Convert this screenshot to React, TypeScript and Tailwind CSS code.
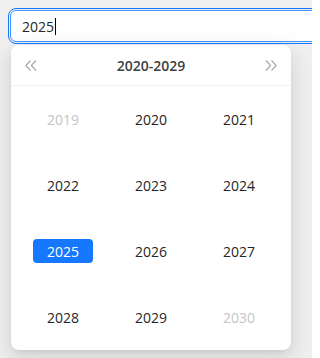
import React from 'react';

const years = [
  { y: 2019, out: true },
  { y: 2020 },
  { y: 2021 },
  { y: 2022 },
  { y: 2023 },
  { y: 2024 },
  { y: 2025, selected: true },
  { y: 2026 },
  { y: 2027 },
  { y: 2028 },
  { y: 2029 },
  { y: 2030, out: true },
];

const DoubleArrow = ({ dir }: { dir: 'left' | 'right' }) => (
  <svg width="12" height="11" viewBox="0 0 12 11" fill="none" className={dir === 'right' ? 'rotate-180' : ''}>
    <path d="M5.5 0.5 L0.8 5.5 L5.5 10.5" stroke="#a6a6a6" strokeWidth="1.1" />
    <path d="M11 0.5 L6.3 5.5 L11 10.5" stroke="#a6a6a6" strokeWidth="1.1" />
  </svg>
);

const App: React.FC = () => {
  return (
    <div
      className="relative w-[312px] h-[358px] overflow-hidden bg-[#f0f0f0] text-[14px]"
      style={{ fontFamily: '"Open Sans", "Noto Sans", sans-serif' }}
    >
      {/* Input */}
      <div className="pt-[10px] pl-[10px]">
        <div className="flex items-center w-[320px] h-8 pl-[11px] bg-white border border-[#4096ff] rounded-[6px] outline outline-1 outline-offset-1 outline-[#1677ff] text-[#262626]">
          <span>2025</span>
          <span className="w-px h-[17px] bg-black ml-px" />
        </div>
      </div>

      {/* Year panel */}
      <div className="ml-[11px] mt-[3px] w-[280px] h-[305px] bg-white rounded-lg shadow-[0_6px_16px_0_rgba(0,0,0,0.08),0_3px_6px_-4px_rgba(0,0,0,0.12),0_9px_28px_8px_rgba(0,0,0,0.05)]">
        <div className="flex items-center justify-between h-[41px] px-[14px] border-b border-[#f0f0f0]">
          <DoubleArrow dir="left" />
          <span className="font-semibold text-[#404040]">2020-2029</span>
          <DoubleArrow dir="right" />
        </div>
        <div className="grid grid-cols-3 px-2">
          {years.map((item) => (
            <div key={item.y} className="flex items-center justify-center h-[66px]">
              <div
                className={`flex items-center justify-center w-[60px] h-6 rounded ${
                  item.selected
                    ? 'bg-[#1677ff] text-white'
                    : item.out
                    ? 'text-[#c4c4c4]'
                    : 'text-[#262626]'
                }`}
              >
                {item.y}
              </div>
            </div>
          ))}
        </div>
      </div>
    </div>
  );
};

export default App;
